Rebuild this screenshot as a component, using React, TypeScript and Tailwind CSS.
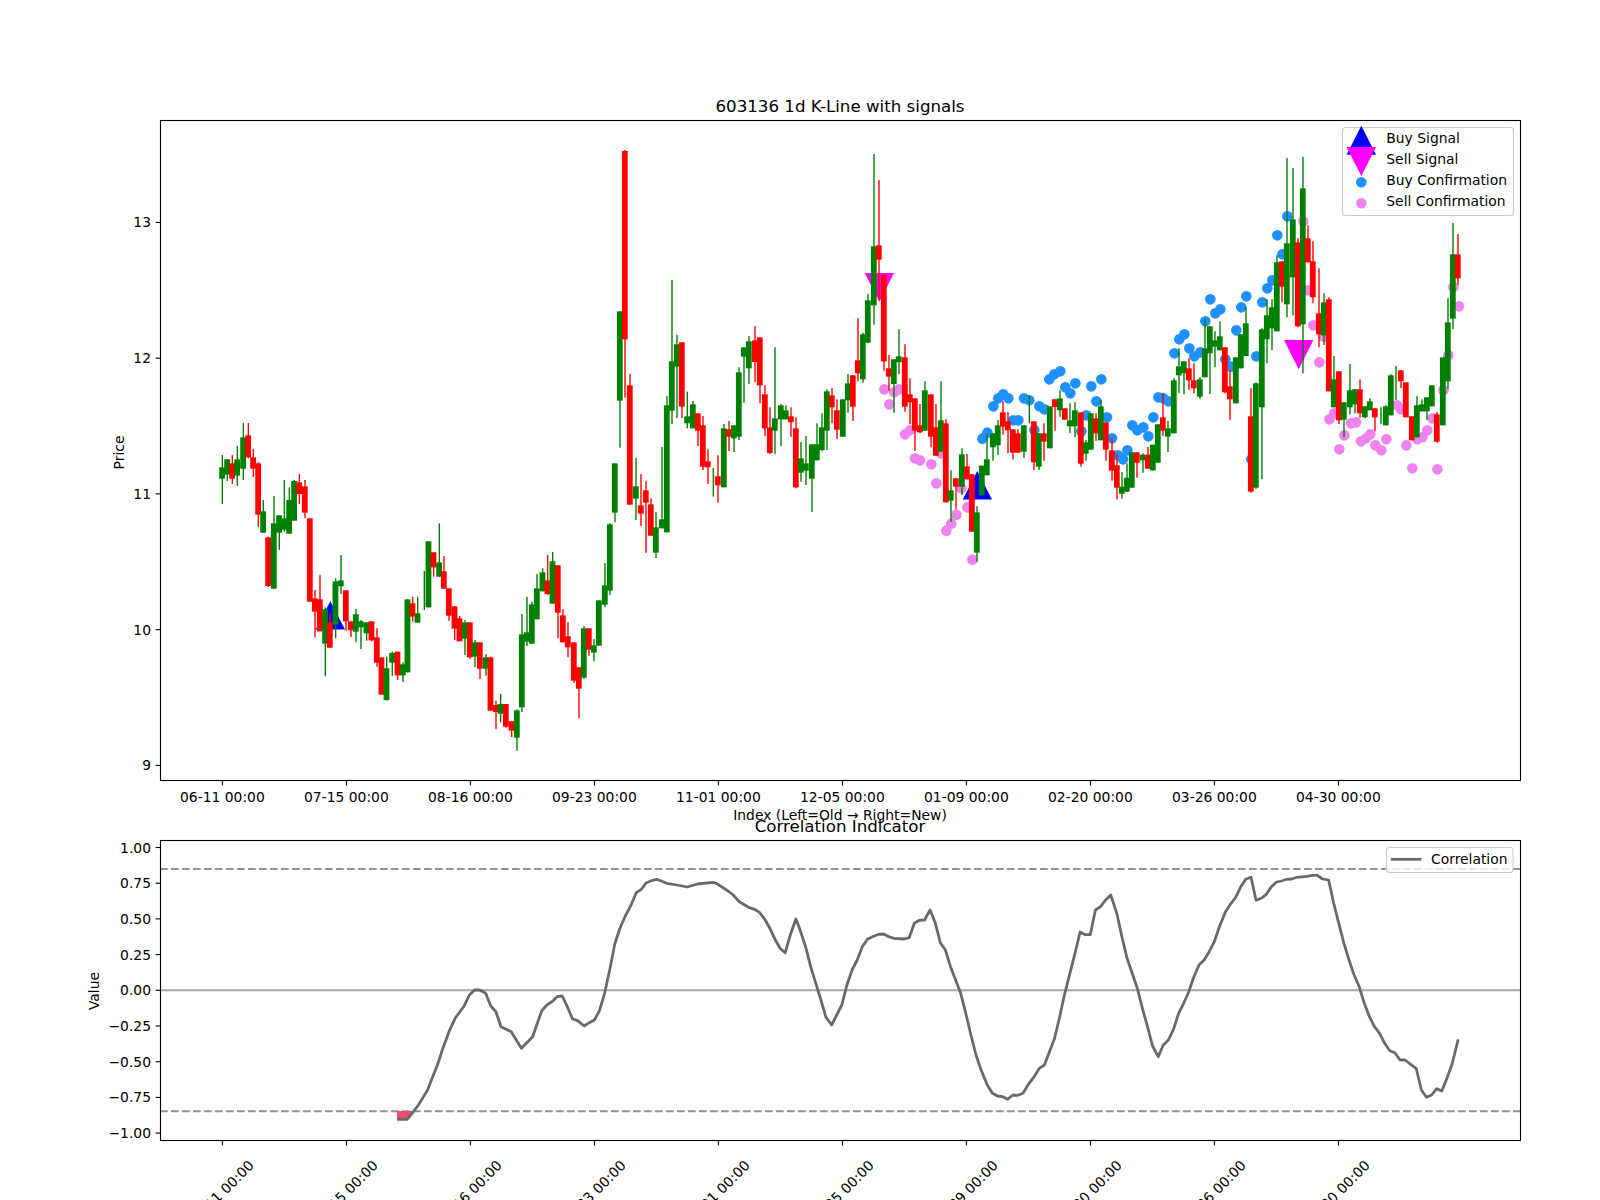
import React from 'react';

// candle rows read off the chart: [x, wickTop, bodyTop, bodyBottom, wickBottom, isRed]
// a row with bodyTop 0 only has a wick (its body is hidden by a neighbour)
type Bar = [number, number, number, number, number, number];
type Segment = { x0: number; y0: number; bars: Bar[] };

const segments: Segment[] = [
  {
    x0: 150,
    y0: 400,
    bars: [
      [217, 165, 202, 236, 312, 0], [232, 178, 178, 224, 243, 0], [247, 165, 190, 236, 252, 1], [262, 138, 178, 227, 258, 0],
      [280, 69, 112, 206, 240, 0], [295, 69, 106, 172, 175, 1], [310, 147, 172, 206, 231, 1], [325, 187, 190, 344, 381, 1],
      [340, 300, 334, 398, 398, 0], [355, 410, 412, 558, 561, 1], [372, 288, 370, 566, 566, 0], [388, 346, 346, 398, 450, 0],
      [403, 240, 355, 389, 395, 0], [418, 262, 300, 401, 401, 0], [433, 240, 243, 362, 362, 0], [448, 222, 247, 282, 312, 1],
      [465, 240, 259, 338, 355, 1], [480, 355, 355, 605, 605, 1], [495, 570, 595, 635, 712, 1], [510, 525, 598, 694, 694, 1],
      [526, 622, 628, 731, 828, 0], [540, 640, 667, 743, 743, 1], [557, 535, 544, 674, 715, 0], [573, 465, 541, 559, 582, 0],
      [588, 571, 571, 664, 692, 1], [603, 664, 664, 691, 711, 1], [618, 627, 643, 695, 727, 0], [633, 660, 664, 682, 747, 0],
      [650, 667, 667, 700, 722, 0], [665, 664, 664, 721, 724, 1], [681, 685, 712, 788, 800, 1], [695, 772, 772, 884, 884, 1],
      [710, 770, 805, 900, 902, 0], [727, 755, 759, 788, 828, 0], [743, 755, 755, 826, 840, 1], [759, 787, 793, 826, 846, 0],
      [773, 598, 598, 817, 817, 0], [788, 590, 610, 650, 664, 1], [803, 590, 640, 668, 668, 0], [823, 513, 0, 0, 630, 0],
      [836, 424, 424, 622, 622, 0], [851, 457, 457, 502, 530, 1], [868, 370, 487, 530, 530, 0], [882, 468, 514, 566, 566, 1],
      [897, 565, 565, 647, 662, 1], [914, 619, 619, 686, 720, 1], [929, 648, 655, 724, 724, 1], [945, 660, 667, 716, 765, 0],
      [960, 667, 667, 772, 776, 1], [975, 720, 727, 770, 802, 0], [990, 727, 727, 806, 837, 1], [1008, 762, 772, 806, 827, 0],
      [1022, 770, 772, 932, 932, 1], [1038, 902, 915, 936, 987, 1], [1052, 882, 912, 941, 967, 0], [1068, 912, 912, 980, 983, 1],
      [1085, 964, 964, 992, 1011, 1], [1101, 928, 931, 1013, 1052, 0], [1116, 642, 703, 922, 936, 0], [1131, 590, 697, 725, 738, 0],
      [1146, 605, 613, 731, 731, 0], [1161, 522, 565, 658, 658, 0], [1178, 505, 517, 574, 574, 0], [1193, 465, 541, 582, 585, 1],
      [1208, 456, 484, 611, 611, 0], [1224, 496, 496, 638, 715, 1], [1239, 628, 646, 727, 727, 1], [1254, 666, 709, 742, 772, 1],
      [1272, 727, 727, 842, 848, 1], [1287, 802, 802, 866, 955, 1], [1302, 678, 685, 833, 836, 0], [1317, 685, 685, 749, 767, 1],
      [1332, 717, 736, 758, 784, 0], [1347, 601, 601, 737, 737, 0], [1365, 489, 556, 614, 622, 0], [1380, 370, 373, 572, 585, 0],
      [1395, 190, 190, 338, 367, 0],
    ],
  },
  {
    x0: 600,
    y0: 130,
    bars: [
      [60, 544, 544, 812, 953, 0], [75, 60, 63, 628, 803, 1], [90, 732, 766, 1124, 1124, 1], [108, 984, 1069, 1106, 1170, 0],
      [123, 1032, 1126, 1151, 1188, 1], [138, 1053, 1081, 1118, 1268, 1], [153, 1105, 1123, 1217, 1217, 1], [168, 1146, 1192, 1268, 1284, 0],
      [186, 951, 1168, 1195, 1195, 0], [201, 798, 826, 1207, 1207, 0], [216, 450, 694, 842, 882, 0], [231, 615, 643, 710, 864, 0],
      [246, 637, 637, 830, 864, 1], [262, 785, 859, 880, 895, 0], [279, 813, 823, 895, 895, 0], [294, 850, 850, 902, 948, 1],
      [309, 858, 886, 1010, 1020, 1], [324, 958, 994, 1012, 1062, 1], [340, 1014, 0, 0, 1100, 0], [354, 976, 1039, 1066, 1118, 1],
      [372, 882, 895, 1072, 1072, 0], [387, 873, 898, 920, 963, 1], [402, 886, 886, 925, 966, 0], [417, 712, 727, 920, 930, 0],
      [432, 652, 652, 680, 818, 0], [447, 618, 634, 715, 762, 0], [465, 588, 631, 696, 756, 1], [480, 622, 622, 766, 820, 1],
      [495, 766, 793, 895, 918, 1], [510, 832, 892, 969, 972, 1], [525, 652, 865, 902, 972, 0], [543, 822, 826, 868, 948, 0],
      [558, 826, 841, 868, 868, 0], [573, 832, 859, 877, 920, 1], [588, 862, 895, 1072, 1075, 1], [603, 936, 985, 1028, 1055, 0],
      [618, 918, 1000, 1022, 1065, 0], [636, 943, 943, 1046, 1146, 0], [651, 880, 943, 991, 991, 0], [666, 850, 892, 960, 963, 0],
      [681, 778, 784, 902, 960, 0], [696, 774, 796, 832, 880, 1], [711, 808, 841, 899, 927, 1], [729, 808, 808, 920, 920, 0],
      [744, 732, 760, 811, 848, 0], [759, 736, 736, 830, 873, 1], [774, 565, 691, 730, 754, 1], [789, 608, 613, 748, 758, 0],
      [804, 492, 511, 638, 640, 0], [822, 72, 349, 526, 584, 0], [837, 150, 346, 389, 510, 1], [852, 436, 436, 694, 722, 1],
      [867, 675, 715, 740, 782, 1], [882, 688, 688, 762, 848, 0], [897, 598, 679, 697, 732, 0], [915, 643, 682, 830, 845, 1],
      [930, 745, 793, 817, 883, 1], [945, 805, 805, 902, 963, 1], [960, 822, 886, 907, 910, 1], [975, 754, 781, 902, 902, 0],
      [993, 793, 793, 920, 952, 1], [1008, 822, 892, 977, 977, 1], [1023, 754, 871, 965, 965, 0], [1038, 868, 880, 1117, 1117, 1],
      [1053, 1021, 1081, 1112, 1176, 0], [1068, 1045, 1045, 1070, 1138, 1], [1086, 955, 973, 1070, 1095, 0], [1101, 972, 1009, 1048, 1048, 1],
      [1116, 1033, 1033, 1205, 1205, 1], [1131, 1129, 1147, 1268, 1295, 0], [1146, 1007, 1007, 1096, 1096, 0], [1161, 912, 988, 1036, 1036, 0],
      [1179, 910, 910, 952, 992, 0], [1194, 870, 886, 946, 975, 0], [1209, 814, 847, 890, 914, 1], [1224, 846, 874, 901, 970, 1],
      [1239, 898, 898, 968, 988, 1], [1254, 898, 910, 968, 968, 1], [1272, 886, 886, 965, 984, 0], [1288, 796, 0, 0, 880, 0],
      [1302, 874, 874, 997, 1020, 1], [1317, 910, 910, 1010, 1020, 0], [1332, 880, 910, 935, 992, 1],
    ],
  },
  {
    x0: 1050,
    y0: 110,
    bars: [
      [0, 889, 889, 1015, 1015, 0], [15, 868, 868, 891, 962, 1], [30, 841, 865, 901, 920, 0], [45, 895, 895, 929, 929, 1],
      [60, 880, 931, 949, 969, 0], [75, 877, 901, 949, 982, 0], [93, 907, 907, 1061, 1070, 1], [108, 990, 997, 1031, 1052, 0],
      [123, 910, 910, 1019, 1019, 0], [138, 910, 925, 970, 993, 1], [153, 870, 889, 991, 991, 0], [168, 937, 937, 1019, 1052, 1],
      [186, 985, 1021, 1082, 1112, 1], [201, 1033, 1066, 1133, 1168, 1], [216, 1087, 1130, 1151, 1166, 0], [231, 1060, 1103, 1145, 1145, 0],
      [246, 1027, 1027, 1133, 1133, 0], [261, 1027, 1027, 1058, 1103, 1], [279, 1030, 1034, 1051, 1088, 0], [294, 1010, 1034, 1076, 1076, 1],
      [309, 1004, 1004, 1081, 1082, 0], [324, 943, 943, 1058, 1058, 0], [339, 850, 922, 962, 978, 1], [354, 933, 955, 980, 1026, 0],
      [372, 805, 811, 970, 970, 0], [387, 714, 769, 796, 850, 0], [402, 754, 754, 790, 853, 0], [417, 745, 775, 811, 840, 1],
      [432, 760, 811, 835, 850, 1], [450, 802, 808, 860, 866, 0], [465, 625, 715, 802, 802, 0], [480, 649, 649, 730, 852, 0],
      [495, 664, 691, 710, 772, 0], [510, 634, 679, 721, 721, 0], [525, 712, 712, 847, 850, 1], [540, 781, 829, 868, 930, 1],
      [558, 742, 742, 880, 880, 0], [573, 673, 673, 775, 775, 0], [588, 592, 640, 738, 738, 0], [603, 835, 919, 1145, 1148, 1],
      [618, 817, 820, 1133, 1136, 0], [636, 655, 658, 892, 1108, 0], [651, 568, 616, 688, 760, 0], [666, 568, 592, 655, 720, 0],
      [681, 436, 457, 664, 664, 0], [696, 454, 454, 530, 577, 1], [711, 144, 400, 583, 622, 0], [729, 174, 328, 502, 616, 0],
      [744, 385, 397, 649, 652, 1], [759, 141, 235, 643, 790, 0], [774, 346, 385, 457, 457, 1], [789, 393, 454, 562, 580, 1],
      [807, 475, 610, 673, 712, 1], [822, 550, 577, 676, 705, 0], [837, 562, 568, 844, 844, 1], [852, 738, 808, 892, 892, 0],
      [867, 784, 784, 931, 942, 1], [882, 877, 877, 929, 982, 0], [900, 762, 841, 892, 913, 0], [915, 838, 838, 883, 910, 0],
      [930, 808, 838, 910, 923, 1], [945, 889, 889, 922, 925, 0], [960, 865, 874, 901, 901, 0], [975, 895, 895, 922, 964, 1],
      [993, 892, 0, 0, 943, 0], [1008, 886, 889, 946, 946, 0], [1023, 793, 796, 916, 916, 0], [1038, 768, 0, 0, 870, 0],
      [1053, 781, 781, 814, 835, 1], [1068, 817, 817, 922, 922, 1], [1086, 919, 919, 991, 991, 1], [1101, 858, 886, 982, 982, 0],
      [1116, 868, 883, 904, 904, 0], [1131, 862, 862, 904, 930, 0], [1146, 826, 826, 889, 889, 0], [1161, 907, 913, 995, 998, 1],
      [1179, 742, 742, 946, 946, 0], [1194, 565, 637, 814, 838, 0], [1209, 339, 433, 626, 658, 0], [1224, 372, 433, 505, 526, 1],
    ],
  },
];

// confirmation dots, same reading frames as the candles
const buyA: [number, number][] = [
  [1147, 926], [1162, 908], [1180, 829], [1195, 805], [1210, 793], [1225, 805], [1240, 871], [1255, 871], [1272, 805], [1288, 811], [1303, 900], [1318, 829], [1333, 838],
];
const buyB: [number, number][] = [
  [-2, 808], [13, 793], [31, 784], [46, 832], [61, 850], [76, 820], [94, 964], [109, 916], [124, 829], [139, 874], [154, 808], [171, 922], [186, 985], [204, 1036], [219, 1048],
  [232, 1021], [247, 946], [262, 961], [280, 952], [295, 979], [310, 922], [325, 862], [340, 865], [355, 874], [373, 730], [388, 688], [403, 673], [418, 715], [433, 739], [451, 727],
  [466, 634], [481, 568], [496, 610], [511, 598], [526, 748], [543, 770], [559, 661], [574, 592], [589, 559], [604, 1048], [619, 739], [637, 577], [652, 535], [667, 511], [682, 376], [697, 433], [712, 319],
];
const sellA: [number, number][] = [
  [853, 778], [883, 787], [897, 778], [868, 823], [915, 913], [930, 901], [945, 985], [960, 991], [994, 1003], [1009, 1060], [1023, 970], [1039, 1202], [1054, 1181], [1069, 1154], [1084, 1075], [1102, 1132], [1117, 1289],
];
const sellB: [number, number][] = [
  [760, 334], [775, 541], [790, 646], [822, 680], [808, 757], [838, 928], [853, 910], [868, 1018], [883, 976], [903, 940], [918, 937], [933, 994], [948, 985], [961, 973], [976, 1006], [994, 1021],
  [1009, 988], [1041, 886], [1053, 898], [1069, 1006], [1087, 1075], [1102, 988], [1117, 982], [1132, 961], [1147, 925], [1162, 1078], [1180, 841], [1195, 736], [1210, 532], [1227, 589],
];

const corrA: [number, number][] = [
  [778, 1018], [798, 1018], [808, 1000], [820, 975], [838, 930], [848, 890], [858, 852], [868, 805], [880, 755], [892, 715], [910, 677], [920, 645], [930, 630], [940, 630], [952, 640], [962, 678], [972, 695], [982, 740], [1002, 755], [1022, 805],
  [1044, 770], [1052, 735], [1062, 692], [1072, 675], [1082, 665], [1092, 650], [1102, 648], [1112, 680], [1122, 716], [1132, 722], [1145, 738], [1155, 728], [1165, 720], [1175, 692], [1185, 640], [1195, 570], [1205, 492], [1215, 445], [1225, 410], [1237, 375],
  [1247, 338], [1257, 328], [1267, 308], [1277, 302], [1287, 298], [1307, 310], [1327, 315], [1347, 321], [1367, 312], [1397, 307], [1407, 313], [1427, 333], [1437, 345], [1449, 365], [1469, 383], [1479, 388], [1489, 398], [1499, 418], [1509, 445], [1519, 478],
  [1529, 505], [1539, 518], [1549, 465], [1560, 417],
];
const corrB: [number, number][] = [
  [0, 445], [12, 500], [22, 560], [32, 610], [42, 660], [52, 712], [63, 735], [73, 705], [83, 675], [93, 615], [103, 570], [113, 540], [123, 500], [133, 478], [143, 470], [155, 463], [165, 462], [175, 470], [185, 475], [205, 477],
  [215, 473], [225, 430], [235, 421], [245, 420], [256, 390], [266, 428], [276, 488], [286, 510], [296, 560], [306, 600], [316, 640], [326, 700], [336, 765], [346, 825], [356, 870], [368, 915], [378, 940], [388, 948], [398, 950], [408, 958],
  [418, 945], [428, 946], [438, 940], [450, 910], [460, 890], [470, 865], [480, 855], [490, 815], [500, 775], [510, 710], [520, 640], [530, 580], [540, 520], [550, 456], [560, 464], [570, 464], [580, 390], [590, 380], [600, 360], [610, 345],
  [622, 400], [632, 470], [642, 535], [652, 580], [662, 625], [672, 685], [682, 740], [692, 798], [703, 830], [713, 795], [723, 780], [733, 748], [743, 700], [753, 670], [763, 635], [773, 590], [783, 555], [793, 540], [803, 515], [813, 485],
  [823, 440], [835, 395], [845, 372], [855, 352], [865, 320], [875, 297], [885, 292], [895, 361], [905, 355], [915, 343], [925, 320], [935, 306], [945, 303], [955, 298], [965, 297], [975, 292], [995, 289], [1005, 286], [1015, 286], [1025, 297],
  [1037, 300], [1047, 370], [1057, 430], [1067, 490], [1077, 540], [1087, 585], [1097, 620], [1107, 670], [1117, 710], [1127, 740], [1137, 760], [1147, 790], [1157, 812], [1167, 818], [1177, 840], [1187, 840], [1197, 852], [1209, 866], [1219, 930], [1229, 952],
  [1239, 945], [1249, 926], [1259, 933], [1269, 895], [1279, 852], [1291, 778],
];

const dates = ['06-11', '07-15', '08-16', '09-23', '11-01', '12-05', '01-09', '02-20', '03-26', '04-30'];
const priceTicks = [9, 10, 11, 12, 13];
const valueTicks = [
  [1, '1.00'], [0.75, '0.75'], [0.5, '0.50'], [0.25, '0.25'], [0, '0.00'],
  [-0.25, '\u22120.25'], [-0.5, '\u22120.50'], [-0.75, '\u22120.75'], [-1, '\u22121.00'],
] as const;

const tickX = (i: number) => 222.4 + i * 124;
const priceY = (p: number) => 765.4 - (p - 9) * 135.75;
const valueY = (v: number) => 990.3 - v * 142.8;

const corrPoints = [
  ...corrA.map(([x, y]) => `${(x / 1.96).toFixed(1)},${(780 + y / 3).toFixed(1)}`),
  ...corrB.map(([x, y]) => `${(799.5 + x / 1.96).toFixed(1)},${(780 + y / 3).toFixed(1)}`),
].join(' ');

function Candles() {
  return (
    <>
      {segments.map((seg) =>
        seg.bars.map(([x, wt, bt, bb, wb, red]) => {
          const cx = seg.x0 + x / 3;
          const color = red ? '#ff0000' : '#008000';
          return (
            <g key={`${seg.x0}-${x}`}>
              <line x1={cx} x2={cx} y1={seg.y0 + wt / 3} y2={seg.y0 + wb / 3} stroke={color} strokeWidth={1.39} />
              {bt > 0 && (
                <rect x={cx - 3.1} y={seg.y0 + bt / 3} width={5.8} height={(bb - bt) / 3} fill={color} />
              )}
            </g>
          );
        })
      )}
    </>
  );
}

function Dots({ pts, x0, y0, color }: { pts: [number, number][]; x0: number; y0: number; color: string }) {
  return (
    <>
      {pts.map(([x, y]) => (
        <circle key={`${x}-${y}`} cx={x0 + x / 3} cy={y0 + y / 3} r={5.3} fill={color} />
      ))}
    </>
  );
}

export default function App() {
  return (
    <div className="w-[1600px] h-[1200px] bg-white overflow-hidden">
      <svg width={1600} height={1200} viewBox="0 0 1600 1200" className="block font-['DejaVu_Sans',sans-serif] fill-black text-[13.89px]">
        {/* price panel */}
        <text x={840} y={112} textAnchor="middle" className="text-[16.67px]">603136 1d K-Line with signals</text>

        <Dots pts={buyA} x0={600} y0={130} color="#1e90ff" />
        <Dots pts={buyB} x0={1050} y0={110} color="#1e90ff" />
        <Dots pts={sellA} x0={600} y0={130} color="#ee82ee" />
        <Dots pts={sellB} x0={1050} y0={110} color="#ee82ee" />
        <polygon points="330.3,601.3 345,629.5 315.7,629.5" fill="#0000ff" />
        <polygon points="977.3,471 992,499.5 962.7,499.5" fill="#0000ff" />
        <polygon points="864.7,273 894,273 879.3,302" fill="#ff00ff" />
        <polygon points="1284,340 1313.4,340 1298.7,369.3" fill="#ff00ff" />
        <Candles />

        <rect x={160.5} y={120.5} width={1360} height={660} fill="none" stroke="#000" strokeWidth={1.1} />
        {dates.map((d, i) => (
          <g key={d}>
            <line x1={tickX(i)} x2={tickX(i)} y1={780.5} y2={785.4} stroke="#000" strokeWidth={1.1} />
            <text x={tickX(i)} y={802} textAnchor="middle">{d} 00:00</text>
          </g>
        ))}
        {priceTicks.map((p) => (
          <g key={p}>
            <line x1={155.6} x2={160.5} y1={priceY(p)} y2={priceY(p)} stroke="#000" strokeWidth={1.1} />
            <text x={151} y={priceY(p) + 5} textAnchor="end">{p}</text>
          </g>
        ))}
        <text transform="translate(124 452.5) rotate(-90)" textAnchor="middle">Price</text>
        <text x={840} y={820} textAnchor="middle">Index (Left=Old → Right=New)</text>

        {/* legend */}
        <rect x={1342.5} y={127.5} width={171} height={88} rx={3} fill="#ffffff" fillOpacity={0.8} stroke="#cccccc" strokeWidth={1.1} />
        <polygon points="1361.3,125.7 1376,154.7 1346.6,154.7" fill="#0000ff" />
        <polygon points="1346.6,147 1376,147 1361.3,176" fill="#ff00ff" />
        <circle cx={1361.3} cy={182.3} r={5.3} fill="#1e90ff" />
        <circle cx={1361.3} cy={203.3} r={5.3} fill="#ee82ee" />
        <text x={1386.3} y={143.3}>Buy Signal</text>
        <text x={1386.3} y={164.3}>Sell Signal</text>
        <text x={1386.3} y={185.3}>Buy Confirmation</text>
        <text x={1386.3} y={206.3}>Sell Confirmation</text>

        {/* correlation panel */}
        <text x={840} y={832} textAnchor="middle" className="text-[16.67px]">Correlation Indicator</text>
        <line x1={160} x2={1520} y1={869} y2={869} stroke="#808080" strokeOpacity={0.85} strokeWidth={2.08} strokeDasharray="7.7 3.3" />
        <line x1={160} x2={1520} y1={1111.2} y2={1111.2} stroke="#808080" strokeOpacity={0.85} strokeWidth={2.08} strokeDasharray="7.7 3.3" />
        <line x1={160} x2={1520} y1={990.3} y2={990.3} stroke="#808080" strokeOpacity={0.7} strokeWidth={2.08} />
        <polygon points="397,1111 414,1111 407,1119 397,1119" fill="#e8506e" />
        <polyline points={corrPoints} fill="none" stroke="#696969" strokeWidth={2.78} strokeLinejoin="round" />

        <rect x={160.5} y={840.5} width={1360} height={300} fill="none" stroke="#000" strokeWidth={1.1} />
        {dates.map((d, i) => (
          <g key={d}>
            <line x1={tickX(i)} x2={tickX(i)} y1={1140.5} y2={1145.4} stroke="#000" strokeWidth={1.1} />
            <text transform={`translate(${tickX(i) - 0.5} 1193.5) rotate(-45)`} textAnchor="middle" dominantBaseline="middle">{d} 00:00</text>
          </g>
        ))}
        {valueTicks.map(([v, label]) => (
          <g key={label}>
            <line x1={155.6} x2={160.5} y1={valueY(v)} y2={valueY(v)} stroke="#000" strokeWidth={1.1} />
            <text x={151} y={valueY(v) + 5} textAnchor="end">{label}</text>
          </g>
        ))}
        <text transform="translate(98.5 991) rotate(-90)" textAnchor="middle">Value</text>

        <rect x={1386.5} y={847.5} width={126.5} height={25} rx={3} fill="#ffffff" fillOpacity={0.8} stroke="#cccccc" strokeWidth={1.1} />
        <line x1={1390.8} x2={1421.4} y1={859.3} y2={859.3} stroke="#696969" strokeWidth={2.78} />
        <text x={1431} y={863.5}>Correlation</text>
      </svg>
    </div>
  );
}
